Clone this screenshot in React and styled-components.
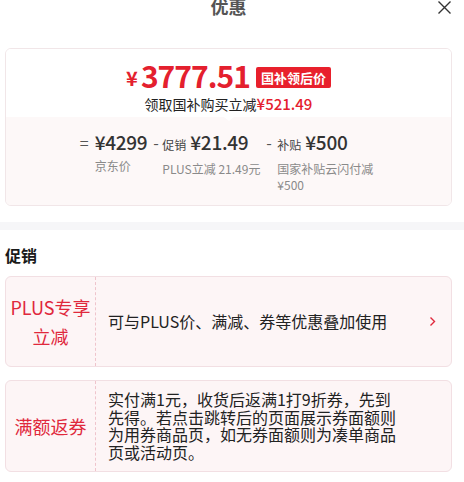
import React from "react";
import styled, { createGlobalStyle } from "styled-components";

const Global = createGlobalStyle`
  html, body { margin: 0; padding: 0; background: #fff; }
  body { font-family: "Noto Sans CJK SC", "Noto Sans", sans-serif; color: #222; }
`;

const Page = styled.div`
  width: 464px;
  box-sizing: border-box;
  padding: 0 12px 20px 5px;
  overflow: hidden;
`;

const Header = styled.div`
  display: grid;
  grid-template-columns: 1fr auto 1fr;
  align-items: center;
  height: 24px;
  margin-top: -6px;
`;

const Title = styled.div`
  grid-column: 2;
  font-size: 18px;
  font-weight: 700;
  color: #555;
  line-height: 24px;
`;

const Close = styled.div`
  grid-column: 3;
  justify-self: end;
  display: flex;
  margin-top: 2px;
`;

const PriceCard = styled.div`
  margin-top: 30px;
  border: 1px solid #f1e6e8;
  border-radius: 6px;
  overflow: hidden;
`;

const Top = styled.div`
  position: relative;
  padding: 9px 0 3px;
  display: flex;
  flex-direction: column;
  align-items: center;
  background: #fff;
  &::after {
    content: "";
    position: absolute;
    left: 50%;
    bottom: -4px;
    margin-left: -5px;
    border-left: 5px solid transparent;
    border-right: 5px solid transparent;
    border-top: 4px solid #fff;
  }
`;

const PriceLine = styled.div`
  display: flex;
  align-items: baseline;
  height: 34px;
  line-height: 34px;
  color: #e4202e;
`;

const Yen = styled.span`
  font-size: 20px;
  font-weight: 700;
  margin-right: 3px;
  position: relative;
  top: -2px;
`;

const Big = styled.span`
  font-size: 30px;
  font-weight: 700;
  letter-spacing: -1px;
`;

const Tag = styled.span`
  align-self: center;
  margin-left: 6px;
  margin-top: 4px;
  height: 21px;
  line-height: 21px;
  padding: 0 5px;
  background: #e8202c;
  color: #fff;
  font-size: 13px;
  font-weight: 700;
  border-radius: 2px;
`;

const SubLine = styled.div`
  margin-top: 2px;
  font-size: 14px;
  line-height: 20px;
  color: #222;
`;

const Red = styled.span`
  color: #e4202e;
  font-size: 15px;
  font-weight: 500;
`;

const Bottom = styled.div`
  background: #fdf8f8;
  padding: 13px 0 12px;
  display: flex;
  justify-content: center;
  align-items: flex-start;
`;

const Col = styled.div`
  display: flex;
  align-items: flex-start;
  margin-right: ${(p) => p.$gap || 0}px;
`;

const Sign = styled.span`
  font-size: 16px;
  line-height: 24px;
  color: #555;
  width: ${(p) => p.$w}px;
`;

const Block = styled.div`
  display: flex;
  flex-direction: column;
  width: ${(p) => (p.$w ? `${p.$w}px` : "auto")};
`;

const Amount = styled.div`
  font-size: 19px;
  line-height: 24px;
  font-weight: 500;
  letter-spacing: -0.3px;
  color: #333;
  white-space: nowrap;
`;

const Small = styled.span`
  font-size: 12px;
  font-weight: 400;
  letter-spacing: 0;
  color: #444;
  margin-right: 4px;
`;

const Label = styled.div`
  margin-top: 4px;
  font-size: 12px;
  line-height: 16px;
  color: #8a8a8a;
`;

const Band = styled.div`
  margin: 16px -12px 0 -5px;
  height: 8px;
  background: #f6f6f8;
`;

const SectionTitle = styled.div`
  margin-top: 14px;
  font-size: 16px;
  font-weight: 700;
  line-height: 22px;
  color: #1a1a1a;
`;

const Promo = styled.div`
  margin-top: ${(p) => p.$mt}px;
  display: flex;
  min-height: 89px;
  border: 1px solid #f2dfe3;
  border-radius: 6px;
  background: #fdf5f6;
`;

const PromoLeft = styled.div`
  width: 90px;
  box-sizing: border-box;
  border-right: 1px dashed #efc4cc;
  display: flex;
  align-items: center;
  justify-content: center;
  text-align: center;
  font-size: 18px;
  line-height: 29px;
  color: #e0283c;
`;

const PromoBody = styled.div`
  flex: 1;
  display: flex;
  align-items: center;
  padding: 10px 15px 10px 12px;
`;

const PromoText = styled.div`
  width: 292px;
  font-size: 16px;
  line-height: 17.5px;
  color: #222;
`;

const Chevron = styled.div`
  margin-left: auto;
  display: flex;
`;

export default function App() {
  return (
    <Page>
      <Global />
      <Header>
        <Title>优惠</Title>
        <Close>
          <svg width="15" height="13" viewBox="0 0 15 13">
            <path d="M1.5 0.5 L13.5 12.5 M13.5 0.5 L1.5 12.5" stroke="#333" strokeWidth="1.4" fill="none" />
          </svg>
        </Close>
      </Header>

      <PriceCard>
        <Top>
          <PriceLine>
            <Yen>¥</Yen>
            <Big>3777.51</Big>
            <Tag>国补领后价</Tag>
          </PriceLine>
          <SubLine>
            领取国补购买立减<Red>¥521.49</Red>
          </SubLine>
        </Top>
        <Bottom>
          <Col $gap={6}>
            <Sign $w={15}>=</Sign>
            <Block>
              <Amount>¥4299</Amount>
              <Label>京东价</Label>
            </Block>
          </Col>
          <Col $gap={4}>
            <Sign $w={9}>-</Sign>
            <Block $w={100}>
              <Amount>
                <Small>促销</Small>¥21.49
              </Amount>
              <Label>PLUS立减 21.49元</Label>
            </Block>
          </Col>
          <Col>
            <Sign $w={11}>-</Sign>
            <Block $w={100}>
              <Amount>
                <Small>补贴</Small>¥500
              </Amount>
              <Label>国家补贴云闪付减¥500</Label>
            </Block>
          </Col>
        </Bottom>
      </PriceCard>

      <Band />
      <SectionTitle>促销</SectionTitle>

      <Promo $mt={10}>
        <PromoLeft>
          PLUS专享
          <br />
          立减
        </PromoLeft>
        <PromoBody>
          <PromoText>可与PLUS价、满减、券等优惠叠加使用</PromoText>
          <Chevron>
            <svg width="7" height="11" viewBox="0 0 7 11">
              <path d="M1.5 1.5 L5.5 5.5 L1.5 9.5" stroke="#e0283c" strokeWidth="1.4" fill="none" />
            </svg>
          </Chevron>
        </PromoBody>
      </Promo>

      <Promo $mt={13}>
        <PromoLeft>满额返券</PromoLeft>
        <PromoBody>
          <PromoText>
            实付满1元，收货后返满1打9折券，先到先得。若点击跳转后的页面展示券面额则为用券商品页，如无券面额则为凑单商品页或活动页。
          </PromoText>
        </PromoBody>
      </Promo>
    </Page>
  );
}
